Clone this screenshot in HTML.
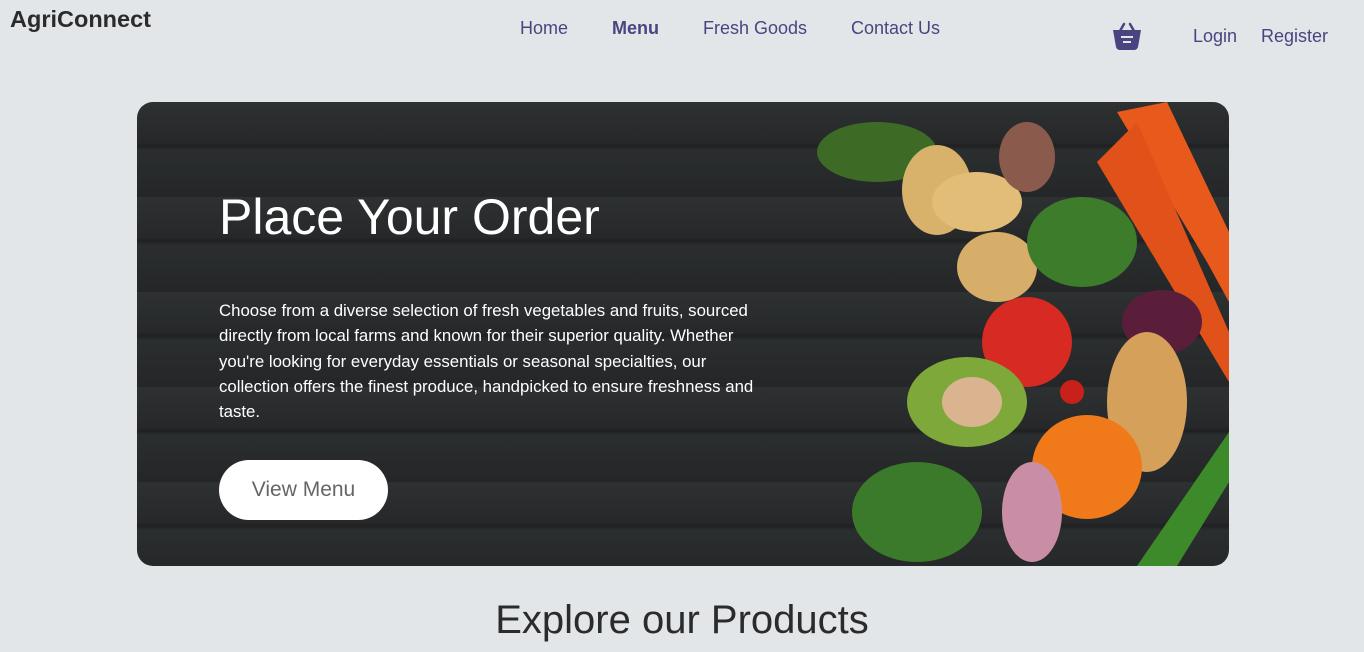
<!DOCTYPE html>
<html><head><meta charset="utf-8"><style>
body{margin:0;width:1364px;height:652px;background:#e3e6e8;font-family:"Liberation Sans",sans-serif;overflow:hidden;position:relative}
.logo{position:absolute;left:10px;top:6px;font-size:23.5px;font-weight:bold;color:#2b2b2b}
.nav a{position:absolute;color:#4a4480;font-size:18px;text-decoration:none}
.hero{position:absolute;left:137px;top:102px;width:1092px;height:464px;border-radius:16px;overflow:hidden;
background:repeating-linear-gradient(180deg,#2e3132 0,#262829 40px,#1e2021 44px,#2b2e2f 48px,#242627 95px);}
h1{position:absolute;left:82px;top:86px;margin:0;color:#fff;font-weight:normal;font-size:50px}
p{position:absolute;left:82px;top:196px;width:548px;margin:0;color:#fff;font-size:16.8px;line-height:25.3px}
.btn{position:absolute;left:82px;top:358px;width:169px;height:60px;border-radius:30px;background:#fff;color:#666;font-size:21px;text-align:center;line-height:60px}
h2{position:absolute;left:0;width:1364px;text-align:center;top:598px;margin:0;font-weight:normal;font-size:40px;color:#2b2b2b}
</style></head><body>
<div class="logo">AgriConnect</div>
<div class="nav">
<a style="left:520px;top:18px">Home</a>
<a style="left:612px;top:18px;font-weight:bold">Menu</a>
<a style="left:703px;top:18px">Fresh Goods</a>
<a style="left:851px;top:18px">Contact Us</a>
<a style="left:1193px;top:26px">Login</a>
<a style="left:1261px;top:26px">Register</a>
</div>
<svg style="position:absolute;left:1111px;top:20px" width="32" height="32" viewBox="0 0 32 32">
<path d="M9 11 L13 4 M23 11 L19 4" stroke="#4a4480" stroke-width="2.5" stroke-linecap="round"/>
<path d="M2 10 H30 L27 27 Q26 30 23 30 H9 Q6 30 5 27 Z" fill="#4a4480"/>
<rect x="10" y="16" width="12" height="2" fill="#e3e6e8"/><rect x="12" y="21" width="8" height="2" fill="#e3e6e8"/>
</svg>
<div class="hero">
<svg style="position:absolute;left:600px;top:0" width="492" height="464">
<ellipse cx="140" cy="50" rx="60" ry="30" fill="#3d6b25"/>
<ellipse cx="200" cy="88" rx="35" ry="45" fill="#d8b26a"/>
<ellipse cx="260" cy="165" rx="40" ry="35" fill="#d6ae6a"/>
<ellipse cx="240" cy="100" rx="45" ry="30" fill="#e2bd77"/>
<ellipse cx="290" cy="55" rx="28" ry="35" fill="#8a5a4c"/>
<ellipse cx="345" cy="140" rx="55" ry="45" fill="#3c7c2a"/>
<path d="M380 10 L470 160 L492 200 L492 130 L430 0Z" fill="#e85a1c"/>
<path d="M360 60 L492 280 L492 230 L400 20Z" fill="#e0521a"/>
<ellipse cx="290" cy="240" rx="45" ry="45" fill="#d62a22"/>
<ellipse cx="425" cy="220" rx="40" ry="32" fill="#5a1e3a"/>
<ellipse cx="230" cy="300" rx="60" ry="45" fill="#7ea83a"/>
<ellipse cx="235" cy="300" rx="30" ry="25" fill="#d9b48e"/>
<ellipse cx="410" cy="300" rx="40" ry="70" fill="#d4a05a"/>
<ellipse cx="350" cy="365" rx="55" ry="52" fill="#f07a1a"/>
<ellipse cx="180" cy="410" rx="65" ry="50" fill="#3a7a2a"/>
<ellipse cx="295" cy="410" rx="30" ry="50" fill="#c98ea6"/>
<path d="M400 464 L492 330 L492 380 L440 464Z" fill="#3d8a2a"/>
<ellipse cx="335" cy="290" rx="12" ry="12" fill="#c8201a"/>
</svg>
<h1>Place Your Order</h1>
<p>Choose from a diverse selection of fresh vegetables and fruits, sourced directly from local farms and known for their superior quality. Whether you're looking for everyday essentials or seasonal specialties, our collection offers the finest produce, handpicked to ensure freshness and taste.</p>
<div class="btn">View Menu</div>
</div>
<h2>Explore our Products</h2>
</body></html>
